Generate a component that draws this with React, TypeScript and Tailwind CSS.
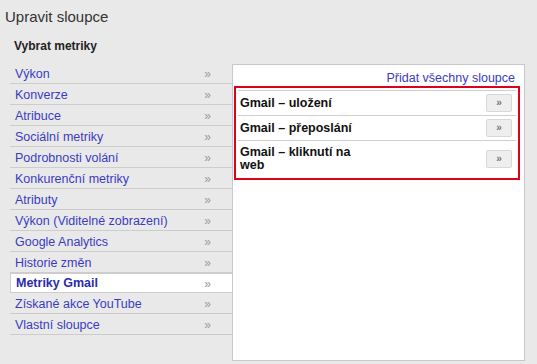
import React from "react";

const groups = [
  "Výkon",
  "Konverze",
  "Atribuce",
  "Sociální metriky",
  "Podrobnosti volání",
  "Konkurenční metriky",
  "Atributy",
  "Výkon (Viditelné zobrazení)",
  "Google Analytics",
  "Historie změn",
  "Metriky Gmail",
  "Získané akce YouTube",
  "Vlastní sloupce",
];

const metrics = ["Gmail – uložení", "Gmail – přeposlání", "Gmail – kliknutí na web"];

export default function App() {
  return (
    <div className="w-[537px] h-[364px] bg-[#e9e9e9] font-['Liberation_Sans',Arial,sans-serif] overflow-hidden">
      {/* Header */}
      <div className="pl-[5px] pt-[7px] text-[15px] leading-[20px] text-[#333]">Upravit sloupce</div>
      <div className="pl-[14px] pt-[10px] text-[12px] leading-[18px] font-bold text-[#222]">Vybrat metriky</div>

      <div className="flex pl-[10px] pt-[8px]">
        {/* Left list */}
        <ul className="w-[222px]">
          {groups.map((g) => {
            const active = g === "Metriky Gmail";
            return (
              <li
                key={g}
                className={
                  active
                    ? "flex items-center justify-between h-[21px] pt-px pl-[5px] pr-[21px] bg-white border-t-2 border-l border-b border-[#cdcdcd] -mt-px text-[12.5px] font-bold text-[#2b2bb0]"
                    : "flex items-center justify-between h-[21px] pt-[2px] pl-[5px] pr-[21px] border-b border-[#cdcdcd] text-[12.5px] text-[#3b3bc2]"
                }
              >
                <span>{g}</span>
                <span className="text-[12px] text-[#9a9a9a] font-normal">»</span>
              </li>
            );
          })}
        </ul>

        {/* Right panel */}
        <div className="w-[293px] h-[297px] bg-white border border-[#c8c8c8] mt-px">
          <div className="flex justify-end pr-[9px] pt-[5px] text-[12.5px] leading-[16px] text-[#3b3bc2]">
            Přidat všechny sloupce
          </div>
          <div className="ml-px mr-[4px] border-2 border-[#e1001a] px-[2px] pt-[2px] pb-px">
            {metrics.map((m) => (
              <div key={m} className="flex items-center justify-between border-t border-[#cfcfcf] py-[3px] pl-[2px] pr-[4px]">
                <span className="w-[130px] py-[2px] text-[12.5px] leading-[13px] font-bold text-[#111]">{m}</span>
                <button className="w-[26px] h-[18px] bg-[#eeeeee] border border-[#d9d9d9] rounded-[2px] text-[10px] font-bold leading-none text-[#777]">
                  »
                </button>
              </div>
            ))}
          </div>
        </div>
      </div>
    </div>
  );
}
